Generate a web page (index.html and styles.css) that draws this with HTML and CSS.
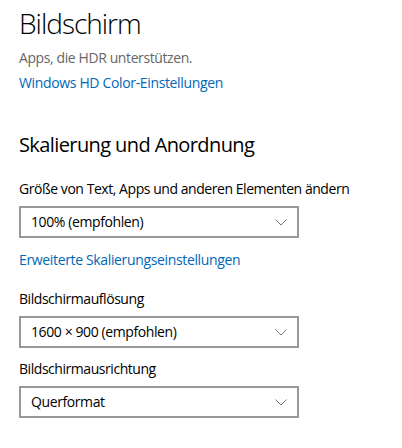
FILE: index.html
```html
<!DOCTYPE html>
<html lang="de">
<head>
<meta charset="utf-8">
<link rel="stylesheet" href="styles.css">
</head>
<body>
<main class="page">
  <h1 class="title">Bildschirm</h1>
  <p class="note">Apps, die HDR unterstützen.</p>
  <a class="link link-hdr" href="#">Windows HD Color-Einstellungen</a>

  <h2 class="subtitle">Skalierung und Anordnung</h2>

  <label class="label label-first">Größe von Text, Apps und anderen Elementen ändern</label>
  <div class="select">
    <span class="select-text">100% (empfohlen)</span>
    <svg class="chevron" width="12" height="7" viewBox="0 0 12 7"><path d="M0.5 0.5 L6 6 L11.5 0.5" fill="none" stroke="#777" stroke-width="1"/></svg>
  </div>
  <a class="link link-adv" href="#">Erweiterte Skalierungseinstellungen</a>

  <label class="label label-res">Bildschirmauflösung</label>
  <div class="select">
    <span class="select-text">1600 × 900 (empfohlen)</span>
    <svg class="chevron" width="12" height="7" viewBox="0 0 12 7"><path d="M0.5 0.5 L6 6 L11.5 0.5" fill="none" stroke="#777" stroke-width="1"/></svg>
  </div>

  <label class="label label-ori">Bildschirmausrichtung</label>
  <div class="select">
    <span class="select-text">Querformat</span>
    <svg class="chevron" width="12" height="7" viewBox="0 0 12 7"><path d="M0.5 0.5 L6 6 L11.5 0.5" fill="none" stroke="#777" stroke-width="1"/></svg>
  </div>
</main>
</body>
</html>
```

FILE: styles.css
```css
html, body {
  margin: 0;
  padding: 0;
  background: #ffffff;
}
body {
  font-family: "Open Sans", "Noto Sans", sans-serif;
  color: #000;
  width: 402px;
  height: 448px;
  overflow: hidden;
}
.page {
  display: flex;
  flex-direction: column;
  align-items: flex-start;
  padding: 5px 19px 0 19px;
}
.title {
  margin: 0;
  font-size: 28px;
  font-weight: 300;
  line-height: 36px;
  letter-spacing: -1px;
}
.note {
  margin: 7px 0 0 0;
  font-size: 14px;
  line-height: 20px;
  color: #666666;
  letter-spacing: -0.4px;
}
.link {
  font-size: 14px;
  line-height: 20px;
  color: #0067b8;
  text-decoration: none;
  letter-spacing: -0.35px;
}
.link-hdr {
  margin-top: 5px;
}
.subtitle {
  margin: 38px 0 0 0;
  font-size: 20px;
  font-weight: 400;
  line-height: 28px;
  letter-spacing: -0.6px;
}
.label {
  font-size: 14px;
  line-height: 20px;
  letter-spacing: -0.45px;
}
.label-first { margin-top: 20px; }
.label-res { margin-top: 19px; }
.label-ori { margin-top: 11px; }
.select {
  box-sizing: border-box;
  width: 280px;
  height: 32px;
  margin-top: 7px;
  border: 2px solid #999;
  display: flex;
  align-items: center;
  justify-content: space-between;
  padding: 0 10px 0 10px;
}
.select-text {
  font-size: 14px;
  line-height: 20px;
  letter-spacing: -0.4px;
}
.chevron {
  display: block;
}
.link-adv {
  margin-top: 12px;
}
```
